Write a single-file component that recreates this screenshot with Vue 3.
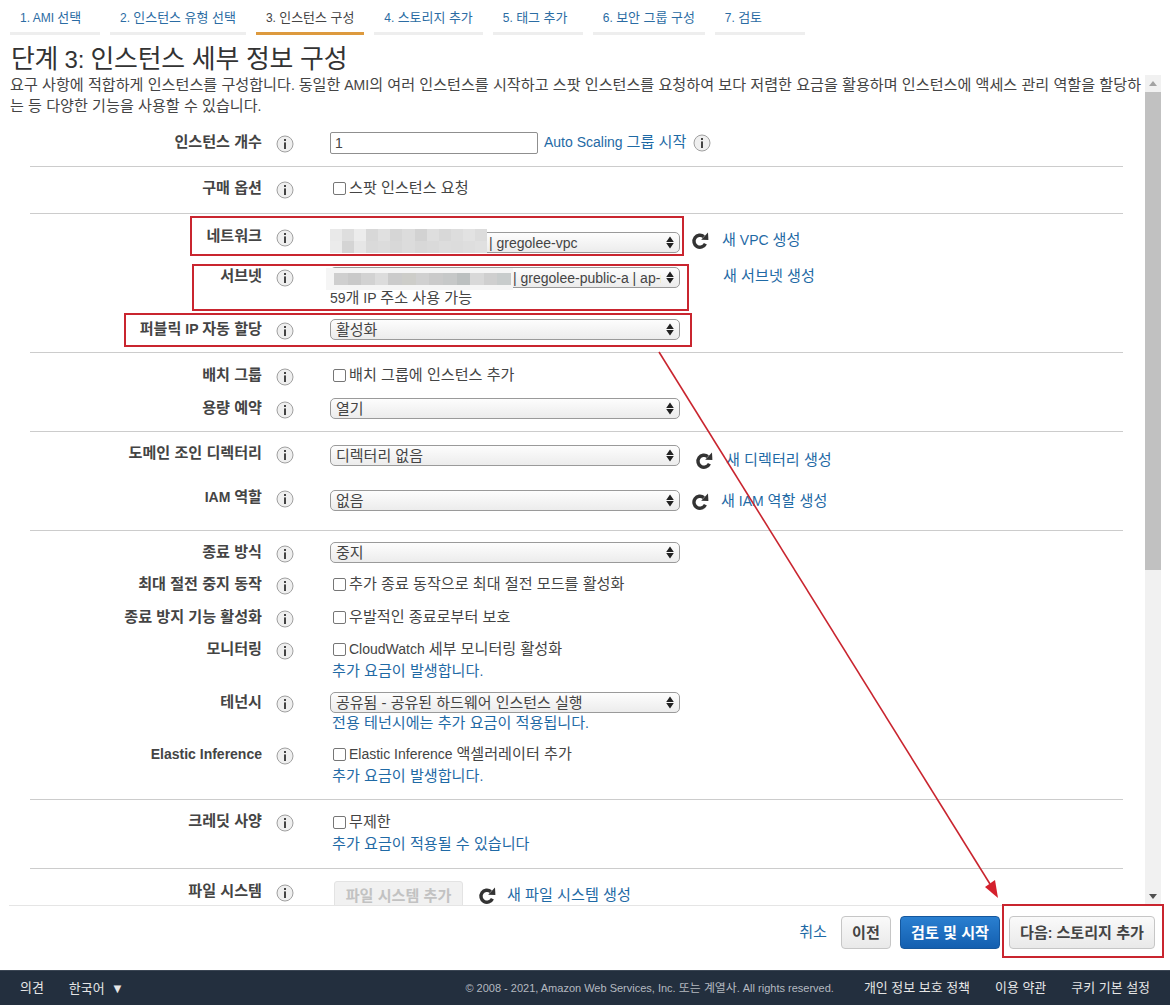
<script setup>
import { h } from 'vue';

// hangul runs render a little larger than the latin text around them
const K = (props) =>
  props.t.split(/([가-힣]+(?: [가-힣]+)*)/).map((s, i) => (i % 2 ? h('span', { class: 'ko' }, s) : s));
K.props = ['t'];

const tabs = [
  { text: '1. AMI 선택' },
  { text: '2. 인스턴스 유형 선택' },
  { text: '3. 인스턴스 구성', active: true },
  { text: '4. 스토리지 추가' },
  { text: '5. 태그 추가' },
  { text: '6. 보안 그룹 구성' },
  { text: '7. 검토' },
];

// pt = section top padding, h = row height, off = control offset from the row top
const sections = [
  { pt: 4, rows: [
    { label: '인스턴스 개수', h: 36, off: 2, type: 'input', value: '1', link: 'Auto Scaling 그룹 시작', trailInfo: true, extra: { ml: 6, top: 4 } },
  ] },
  { pt: 9, rows: [
    { label: '구매 옵션', h: 37, type: 'check', value: '스팟 인스턴스 요청' },
  ] },
  { pt: 10, rows: [
    { label: '네트워크', h: 40, off: 8, type: 'select', value: '| gregolee-vpc', cls: 'sel-vpc', blur: 'vpc', refresh: true, link: '새 VPC 생성', extra: { ml: 11, top: 8, gap: 13 } },
    { label: '서브넷', h: 53, off: 3, type: 'select', value: '| gregolee-public-a | ap-northeast-2a', cls: 'sel-subnet', blur: 'subnet', sub: '59개 IP 주소 사용 가능', subPlain: true, link: '새 서브넷 생성', extra: { ml: 43, top: 4 } },
    { label: '퍼블릭 IP 자동 할당', h: 35, off: 2, type: 'select', value: '활성화' },
  ] },
  { pt: 10, rows: [
    { label: '배치 그룹', h: 33, type: 'check', value: '배치 그룹에 인스턴스 추가' },
    { label: '용량 예약', h: 35, off: 2, type: 'select', value: '열기' },
  ] },
  { pt: 9, rows: [
    { label: '도메인 조인 디렉터리', h: 44, off: 4, type: 'select', value: '디렉터리 없음', refresh: true, link: '새 디렉터리 생성', extra: { ml: 15, top: 11, gap: 13 } },
    { label: 'IAM 역할', h: 45, off: 5, type: 'select', value: '없음', refresh: true, link: '새 IAM 역할 생성', extra: { ml: 11, top: 8, gap: 12 } },
  ] },
  { pt: 9, rows: [
    { label: '종료 방식', h: 32, off: 2, type: 'select', value: '중지' },
    { label: '최대 절전 중지 동작', h: 33, type: 'check', value: '추가 종료 동작으로 최대 절전 모드를 활성화' },
    { label: '종료 방지 기능 활성화', h: 32, type: 'check', value: '우발적인 종료로부터 보호' },
    { label: '모니터링', h: 53, type: 'check', value: 'CloudWatch 세부 모니터링 활성화', sub: '추가 요금이 발생합니다.' },
    { label: '테넌시', h: 52, off: 2, type: 'select', value: '공유됨 - 공유된 하드웨어 인스턴스 실행', sub: '전용 테넌시에는 추가 요금이 적용됩니다.' },
    { label: 'Elastic Inference', h: 57, type: 'check', value: 'Elastic Inference 액셀러레이터 추가', sub: '추가 요금이 발생합니다.' },
  ] },
  { pt: 9, rows: [
    { label: '크레딧 사양', h: 59, off: 1, type: 'check', value: '무제한', sub: '추가 요금이 적용될 수 있습니다' },
  ] },
  { pt: 10, last: true, rows: [
    { label: '파일 시스템', h: 40, off: 2, type: 'button', value: '파일 시스템 추가', refresh: true, link: '새 파일 시스템 생성', extra: { ml: 15, top: 8, gap: 11 } },
  ] },
];

// greys for the pixelated part of the select values
const blurBlocks = {
  vpc: ['#e9e9e9', '#dedede', '#ececec', '#d8d8d8', '#e0e0e0', '#d6d6d6', '#dcdcdc', '#d2d2d2', '#dedede', '#d8d8d8', '#dddddd', '#e2e2e2', '#dcdcdc',
    '#ebebeb', '#d4d4d4', '#e6e6e6', '#dadada', '#dcdcdc', '#d8d8d8', '#dcdcdc', '#d8d8d8', '#dadada', '#dddddd', '#dcdcdc', '#dedede', '#e0e0e0'],
  subnet: ['#cfcfcf', '#c9c9c9', '#d2d2d2', '#dcdcdc', '#cbcbcb', '#cdcdc9', '#d0d0d0', '#cacaca', '#c6c8c8', '#bcc0c0', '#d8d8d8', '#cfcfcf', '#c8cccc'],
};
</script>

<template>
  <div class="page">
    <nav class="tabs">
      <a v-for="t in tabs" :key="t.text" class="tab" :class="{ active: t.active }"><K :t="t.text" /></a>
    </nav>

    <h1 class="title"><K t="단계 3: 인스턴스 세부 정보 구성" /></h1>

    <div class="body">
      <div class="scroll">
        <p class="desc">
          <K t="요구 사항에 적합하게 인스턴스를 구성합니다. 동일한 AMI의 여러 인스턴스를 시작하고 스팟 인스턴스를 요청하여 보다 저렴한 요금을 활용하며 인스턴스에 액세스 관리 역할을 할당하" /><br />
          <K t="는 등 다양한 기능을 사용할 수 있습니다." />
        </p>

        <section v-for="(s, i) in sections" :key="i" class="section" :class="{ last: s.last }" :style="{ paddingTop: s.pt + 'px' }">
          <div v-for="r in s.rows" :key="r.label" class="row" :style="{ height: r.h + 'px' }">
            <div class="label"><K :t="r.label" /></div>
            <svg class="info" width="18" height="18" viewBox="0 0 18 18">
              <circle cx="9" cy="9" r="8" fill="#efefef" stroke="#a0a0a0" />
              <rect x="8" y="7.4" width="2" height="6.6" fill="#444" />
              <rect x="8" y="4" width="2" height="2" fill="#444" />
            </svg>

            <div class="control" :class="'ctl-' + r.type" :style="{ marginTop: (r.off || 0) + 'px' }">
              <div v-if="r.type === 'select'" class="select-wrap">
                <select class="select" :class="r.cls">
                  <option>{{ r.value }}</option>
                </select>
                <svg class="arrows" width="8" height="13" viewBox="0 0 8 13">
                  <path d="M4 0.5 L7.8 6 H0.2 Z M4 12.5 L0.2 7 H7.8 Z" fill="#222" />
                </svg>
                <div v-if="r.blur" class="blur" :class="'blur-' + r.blur">
                  <i v-for="(c, n) in blurBlocks[r.blur]" :key="n" :style="{ background: c }"></i>
                </div>
              </div>
              <input v-else-if="r.type === 'input'" class="input" :value="r.value" />
              <label v-else-if="r.type === 'check'" class="check">
                <input type="checkbox" />
                <span><K :t="r.value" /></span>
              </label>
              <button v-else class="btn-disabled" disabled><K :t="r.value" /></button>
              <div v-if="r.sub" class="sub" :class="{ plain: r.subPlain }"><K :t="r.sub" /></div>
            </div>

            <div v-if="r.link" class="extra" :style="{ marginLeft: r.extra.ml + 'px', marginTop: r.extra.top + 'px', gap: (r.extra.gap || 0) + 'px' }">
              <svg v-if="r.refresh" class="refresh" width="18" height="18" viewBox="0 0 18 18">
                <path d="M14.4 11.8 A6 6 0 1 1 12.8 4.6" fill="none" stroke="#333" stroke-width="3.4" />
                <path d="M10.2 7.8 L17.4 8 L17 0.6 Z" fill="#333" />
              </svg>
              <a class="link"><K :t="r.link" /></a>
              <svg v-if="r.trailInfo" class="info trail" width="18" height="18" viewBox="0 0 18 18">
                <circle cx="9" cy="9" r="8" fill="#efefef" stroke="#a0a0a0" />
                <rect x="8" y="7.4" width="2" height="6.6" fill="#444" />
                <rect x="8" y="4" width="2" height="2" fill="#444" />
              </svg>
            </div>
          </div>
        </section>
      </div>

      <div class="scrollbar">
        <svg class="sb-arrow" width="16" height="17" viewBox="0 0 16 17"><path d="M8 6 L12 11 H4 Z" fill="#a3a3a3" /></svg>
        <div class="sb-thumb"></div>
        <div class="sb-rest"></div>
        <svg class="sb-arrow" width="16" height="17" viewBox="0 0 16 17"><path d="M8 11 L12 6 H4 Z" fill="#505050" /></svg>
      </div>
    </div>

    <div class="actions">
      <a class="link cancel"><K t="취소" /></a>
      <button class="btn prev"><K t="이전" /></button>
      <button class="btn primary"><K t="검토 및 시작" /></button>
      <button class="btn next"><K t="다음: 스토리지 추가" /></button>
    </div>

    <footer class="footer">
      <a class="f-item"><K t="의견" /></a>
      <a class="f-item lang"><K t="한국어" /> <span class="caret">▼</span></a>
      <span class="copy"><K t="© 2008 - 2021, Amazon Web Services, Inc. 또는 계열사. All rights reserved." /></span>
      <a class="f-item"><K t="개인 정보 보호 정책" /></a>
      <a class="f-item"><K t="이용 약관" /></a>
      <a class="f-item"><K t="쿠키 기본 설정" /></a>
    </footer>

    <!-- annotations drawn on top of the screenshot -->
    <svg class="marks" width="1170" height="1005" viewBox="0 0 1170 1005">
      <g fill="none" stroke="#c9252f" stroke-width="2">
        <rect x="191" y="217" width="492" height="38" />
        <rect x="193" y="265" width="495" height="45" />
        <rect x="125" y="314" width="566" height="32" />
        <rect x="1003" y="905" width="160" height="52" />
        <line x1="659" y1="352" x2="990" y2="884" stroke-width="1.6" />
      </g>
      <path d="M998 898 L985 887 L995 880 Z" fill="#d4202c" />
    </svg>
  </div>
</template>

<style>
html, body { margin: 0; overflow: hidden; background: #fff; }
.ko { font-size: 1.08em; line-height: 1; }
</style>

<style scoped>
.page {
  position: relative;
  width: 1170px;
  height: 1005px;
  display: flex;
  flex-direction: column;
  overflow: hidden;
  font-family: "Liberation Sans", "Noto Sans CJK KR", sans-serif;
  font-size: 14px;
  color: #444;
}
.tabs { display: flex; gap: 10px; padding-left: 10px; height: 35px; box-sizing: border-box; }
.tab {
  min-width: 70px;
  padding: 10px 10px 0;
  height: 22px;
  border-bottom: 3px solid #eee;
  font-size: 12px;
  line-height: 16px;
  color: #2b6ca3;
  white-space: nowrap;
}
.tab.active { border-bottom-color: #dd9a3e; color: #444; }
.title {
  margin: 9px 0 0 11px;
  height: 31px;
  font-size: 24px;
  line-height: 31px;
  font-weight: 400;
  letter-spacing: -0.25px;
  color: #333;
  white-space: nowrap;
}
.body { display: flex; height: 830px; }
.scroll { width: 1135px; margin-left: 10px; height: 830px; overflow: hidden; }
.desc { margin: 0 0 9px; height: 42px; line-height: 21px; white-space: nowrap; }
.section { margin: 0 22px 0 20px; width: 1093px; border-bottom: 1px solid #ccc; }
.section.last { border-bottom: 0; }
.row { display: flex; align-items: flex-start; }
.label {
  width: 232px;
  flex: none;
  text-align: right;
  font-weight: 700;
  line-height: 24px;
  white-space: nowrap;
}
.info { flex: none; margin: 5px 0 0 14px; }
.control { width: 350px; flex: none; margin-left: 36px; }
.ctl-input { width: 208px; }
.ctl-button { width: 133px; }
.select-wrap { position: relative; width: 350px; height: 21px; }
.select {
  appearance: none;
  display: block;
  width: 350px;
  height: 21px;
  padding: 0 18px 0 5px;
  border: 1px solid #9a9a9a;
  border-radius: 5px;
  background: linear-gradient(#fdfdfd, #ececec);
  font: inherit;
  font-size: 15px;
  color: #444;
}
.sel-vpc { font-size: 14px; padding-left: 158px; }
.sel-subnet { font-size: 14px; padding-left: 182px; }
.arrows { position: absolute; right: 6px; top: 4px; }
.blur {
  position: absolute;
  display: grid;
  grid-template-columns: repeat(13, 1fr);
  filter: blur(0.5px);
}
.blur-vpc { left: 0; top: -3px; width: 157px; height: 24px; grid-template-rows: repeat(2, 1fr); }
.blur-subnet { left: 4px; top: 6px; width: 177px; height: 12px; box-shadow: -3px 0 0 5px #f5f5f5; }
.input {
  display: block;
  width: 208px;
  height: 22px;
  box-sizing: border-box;
  padding: 0 4px;
  border: 1px solid #8f8f8f;
  border-radius: 2px;
  font: inherit;
  color: #444;
  outline: 0;
}
.check { display: flex; align-items: center; height: 24px; padding-left: 3px; gap: 3px; white-space: nowrap; }
.check input { appearance: none; width: 13px; height: 13px; margin: 0; border: 1px solid #767676; border-radius: 2px; background: #fff; }
.sub { line-height: 20px; padding-left: 2px; color: #1f6aa5; white-space: nowrap; }
.sub.plain { padding-left: 0; color: #444; }
.btn-disabled {
  display: block;
  margin-left: 4px;
  width: 129px;
  height: 30px;
  padding: 0;
  border: 1px solid #e3e3e3;
  border-radius: 3px;
  background: #f1f1f1;
  font: inherit;
  font-weight: 700;
  color: #c2c2c2;
  white-space: nowrap;
}
.extra { display: flex; align-items: center; height: 17px; white-space: nowrap; }
.link { color: #1f6aa5; line-height: 17px; }
.info.trail { margin: 1px 0 0 7px; }
.refresh { flex: none; }
.scrollbar { width: 16px; height: 830px; display: flex; flex-direction: column; background: #f1f1f1; }
.sb-arrow { flex: none; }
.sb-thumb { height: 478px; background: #c1c1c1; flex: none; }
.sb-rest { flex: 1; }
.actions {
  height: 65px;
  margin-left: 9px;
  width: 1146px;
  border-top: 1px solid #e5e5e5;
  box-sizing: border-box;
  padding-top: 10px;
  display: flex;
  align-items: flex-start;
  justify-content: flex-end;
  gap: 9px;
}
.cancel { line-height: 33px; margin-right: 5px; }
.btn {
  height: 33px;
  padding: 0;
  border: 1px solid #c6c6c6;
  border-radius: 4px;
  background: linear-gradient(#fafafa, #e9e9e9);
  font: inherit;
  font-weight: 700;
  color: #444;
}
.btn.prev { width: 50px; }
.btn.primary { border-color: #15579d; background: linear-gradient(#2a7fd0, #135fb0); color: #fff; width: 100px; }
.btn.next { width: 146px; }
.footer {
  height: 35px;
  box-sizing: border-box;
  border-top: 1px solid #3b4654;
  background: #232f3e;
  display: flex;
  align-items: center;
  padding: 0 20px;
  font-size: 12px;
  color: #e6e6e6;
  white-space: nowrap;
}
.f-item { margin-left: 25px; }
.f-item:first-child { margin-left: 0; }
.lang { margin-right: auto; }
.caret { font-size: 13px; margin-left: 3px; }
.copy { color: #b4b9c0; font-size: 11px; margin-right: 5px; }
.marks { position: absolute; left: 0; top: 0; pointer-events: none; }
</style>
